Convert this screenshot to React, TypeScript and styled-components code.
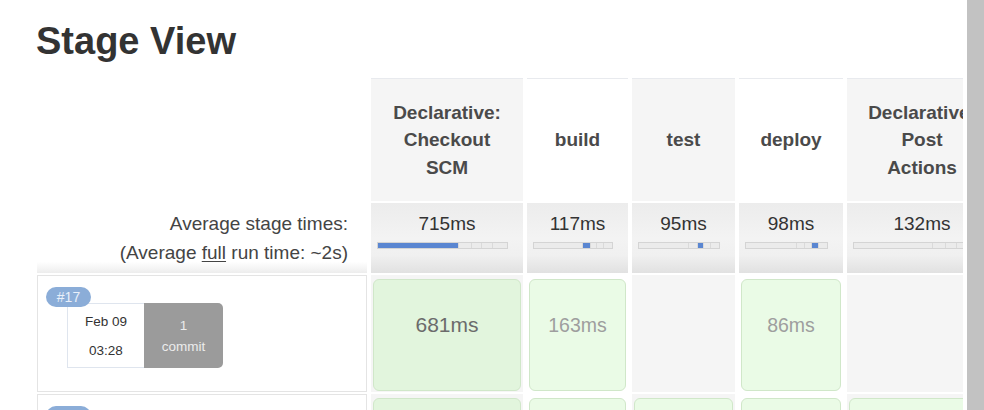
import React from 'react'
import styled, { createGlobalStyle } from 'styled-components'

const GlobalStyle = createGlobalStyle`
  html, body {
    margin: 0;
    padding: 0;
    background: #fff;
  }
  body {
    font-family: 'Liberation Sans', Arial, Helvetica, sans-serif;
    color: #333;
  }
`

type Stage = {
  lines: string[]
  avg: number
  shade?: boolean
}

const stages: Stage[] = [
  { lines: ['Declarative:', 'Checkout', 'SCM'], avg: 715, shade: true },
  { lines: ['build'], avg: 117 },
  { lines: ['test'], avg: 95, shade: true },
  { lines: ['deploy'], avg: 98 },
  { lines: ['Declarative:', 'Post', 'Actions'], avg: 132, shade: true },
]

type Cell = { ms: number; tone: string; size: number; bg: string }

type Run = {
  id: number
  date: string
  time: string
  commits: number
  // null = stage did not run
  cells: (Cell | null)[]
}

const strong = { tone: '#6b6b6b', size: 21, bg: '#e2f5dd' }
const light = { tone: '#9e9e9e', size: 19.5, bg: '#eafbe6' }

const runs: Run[] = [
  {
    id: 17,
    date: 'Feb 09',
    time: '03:28',
    commits: 1,
    cells: [{ ms: 681, ...strong }, { ms: 163, ...light }, null, { ms: 86, ...light }, null],
  },
  {
    id: 16,
    date: 'Feb 09',
    time: '03:21',
    commits: 1,
    cells: [
      { ms: 702, ...strong },
      { ms: 121, ...light },
      { ms: 95, ...light },
      { ms: 110, ...light },
      { ms: 132, ...light },
    ],
  },
]

const total = stages.reduce((s, st) => s + st.avg, 0)

const StageBar = ({ current }: { current: number }) => (
  <Track>
    {stages.map((st, i) => (
      <Segment
        key={i}
        $active={i === current}
        $first={i === 0}
        style={{ width: `${(st.avg / total) * 100}%` }}
      />
    ))}
  </Track>
)

const App = () => {
  return (
    <Page>
      <GlobalStyle />
      <Main>
        <Title>Stage View</Title>
        <Table>
          <Corner />
          {stages.map((st, i) => (
            <HeadCell key={i} $shade={st.shade}>
              <div>
                {st.lines.map((l) => (
                  <div key={l}>{l}</div>
                ))}
              </div>
            </HeadCell>
          ))}

          <AvgLabel>
            <div>Average stage times:</div>
            <div>
              (Average <u>full</u> run time: ~2s)
            </div>
          </AvgLabel>
          {stages.map((st, i) => (
            <AvgCell key={i}>
              <AvgValue>{st.avg}ms</AvgValue>
              <StageBar current={i} />
            </AvgCell>
          ))}

          {runs.map((run) => (
            <React.Fragment key={run.id}>
              <RunInfo>
                <Badge>#{run.id}</Badge>
                <Stamp>
                  <DateBox>
                    <span>{run.date}</span>
                    <span>{run.time}</span>
                  </DateBox>
                  <CommitBox>
                    <span>{run.commits}</span>
                    <span>commit</span>
                  </CommitBox>
                </Stamp>
              </RunInfo>
              {run.cells.map((c, i) => (
                <StageCell key={i} $shade={stages[i].shade}>
                  {c && (
                    <Duration $tone={c.tone} $size={c.size} $bg={c.bg}>
                      {c.ms}ms
                    </Duration>
                  )}
                </StageCell>
              ))}
            </React.Fragment>
          ))}
        </Table>
      </Main>
      <Gutter />
    </Page>
  )
}

export default App

const Page = styled.div`
  display: flex;
  height: 410px;
  overflow: hidden;
`

const Main = styled.div`
  flex: 1;
  min-width: 0;
  overflow: hidden;
  margin-right: 4px;
  padding-left: 37px;
`

const Gutter = styled.div`
  width: 17px;
  flex-shrink: 0;
  background: #c2c2c2;
`

const Title = styled.h2`
  margin: 22px 0 18px -1px;
  font-size: 38px;
  line-height: 38px;
  font-weight: bold;
  color: #333;
`

const Table = styled.div`
  display: grid;
  grid-template-columns: 330px 152px 101px 103px 104px 150px;
  grid-template-rows: 123px 70px 117px 117px;
  column-gap: 4px;
  row-gap: 2px;
  width: max-content;
`

const Corner = styled.div``

const HeadCell = styled.div<{ $shade?: boolean }>`
  display: flex;
  align-items: center;
  justify-content: center;
  text-align: center;
  background: ${({ $shade }) => ($shade ? '#f5f5f5' : '#fff')};
  border-top: 1px solid #e8eaee;
  font-size: 19px;
  line-height: 27.5px;
  font-weight: bold;
  color: #4a4a4a;
  white-space: nowrap;
`

const AvgLabel = styled.div`
  padding: 6px 19px 0 0;
  text-align: right;
  font-size: 19px;
  line-height: 29px;
  color: #444;
  background: linear-gradient(to bottom, #fff 0%, #fff 84%, #ededed 100%);
  u {
    text-decoration-thickness: 1px;
    text-underline-offset: 2px;
  }
`

const AvgCell = styled.div`
  padding-top: 10px;
  background: linear-gradient(to bottom, #ececec 0%, #f3f3f3 50%, #f0f0f0 75%, #e1e1e1 100%);
`

const AvgValue = styled.div`
  text-align: center;
  font-size: 19px;
  line-height: 22px;
  color: #333;
`

const Track = styled.div`
  display: flex;
  box-sizing: border-box;
  height: 7px;
  margin: 7px 15px 0 6px;
  border: 1px solid #d4d4d4;
  background: #ebebeb;
  overflow: hidden;
`

const Segment = styled.div<{ $active: boolean; $first: boolean }>`
  height: 100%;
  box-sizing: border-box;
  background: ${({ $active }) => ($active ? '#5a86d1' : 'transparent')};
  border-left: ${({ $first }) => ($first ? 'none' : '1px solid #dadada')};
`

const RunInfo = styled.div`
  position: relative;
  box-sizing: border-box;
  border: 1px solid #e4e4e4;
  background: #fff;
  padding: 27px 0 0 29px;
`

const Badge = styled.div`
  position: absolute;
  top: 11px;
  left: 8px;
  z-index: 1;
  width: 45px;
  height: 20px;
  border-radius: 10px;
  background: #8badd8;
  color: #e9f0fa;
  font-size: 14px;
  line-height: 20px;
  text-align: center;
`

const Stamp = styled.div`
  display: flex;
`

const DateBox = styled.div`
  box-sizing: border-box;
  width: 77px;
  height: 65px;
  border: 1px solid #dfe5ee;
  border-right: none;
  background: #fff;
  display: flex;
  flex-direction: column;
  justify-content: center;
  align-items: center;
  font-size: 13.5px;
  line-height: 29px;
  color: #333;
`

const CommitBox = styled.div`
  width: 79px;
  height: 65px;
  background: #9b9b9b;
  border-radius: 0 5px 5px 0;
  display: flex;
  flex-direction: column;
  justify-content: center;
  align-items: center;
  font-size: 13.5px;
  line-height: 21px;
  color: #ececec;
`

const StageCell = styled.div<{ $shade?: boolean }>`
  display: flex;
  padding: 4px 2px 1px;
  background: ${({ $shade }) => ($shade ? '#f5f5f5' : '#fff')};
`

const Duration = styled.div<{ $tone: string; $size: number; $bg: string }>`
  flex: 1;
  padding-top: 34px;
  text-align: center;
  line-height: 22px;
  font-size: ${({ $size }) => $size}px;
  color: ${({ $tone }) => $tone};
  background: ${({ $bg }) => $bg};
  border: 1px solid #d0e7c9;
  border-radius: 6px;
`
